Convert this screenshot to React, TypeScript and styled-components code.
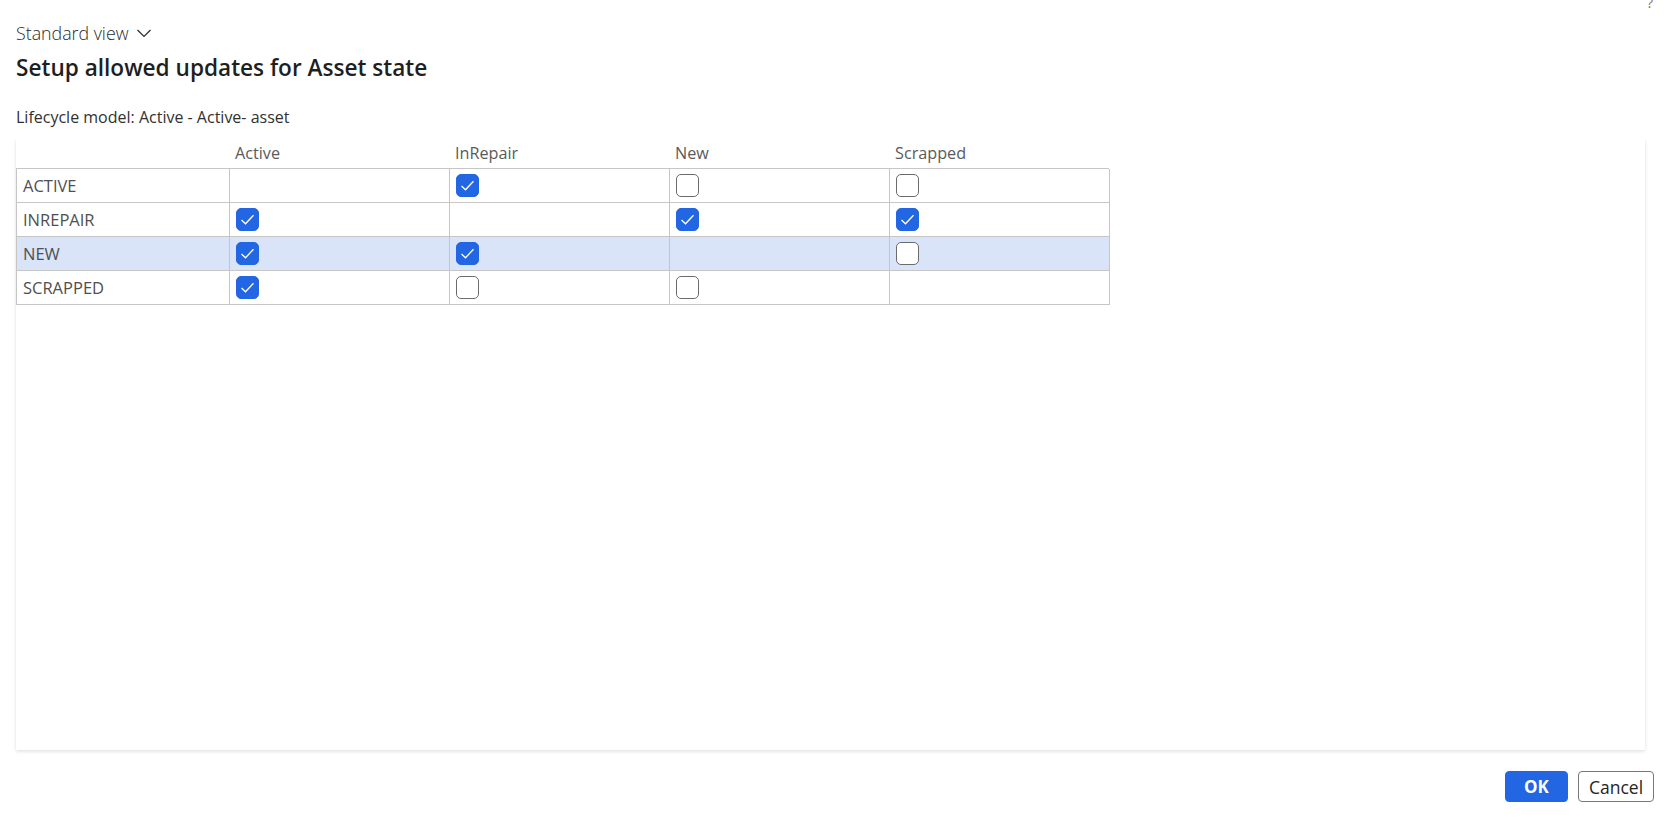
import React from "react";
import styled, { createGlobalStyle } from "styled-components";

const GlobalStyle = createGlobalStyle`
  html, body {
    margin: 0;
    padding: 0;
    background: #ffffff;
  }
  body {
    font-family: "Open Sans", "Noto Sans", sans-serif;
    color: #242424;
  }
`;

const Page = styled.div`
  position: relative;
  display: flex;
  flex-direction: column;
  width: 1670px;
  height: 831px;
  box-sizing: border-box;
  padding: 22px 16px 0 16px;
  overflow: hidden;
`;

const HelpMark = styled.span`
  position: absolute;
  top: -7px;
  right: 17px;
  font-size: 14px;
  color: #707070;
`;

const ViewSelector = styled.div`
  display: flex;
  align-items: center;
  gap: 7px;
  height: 22px;
  font-size: 17.8px;
  font-weight: 300;
  color: #2a2a2a;
`;

const Title = styled.h1`
  margin: 9px 0 0 0;
  font-size: 22.6px;
  line-height: 30px;
  font-weight: 600;
  color: #1f1f1f;
`;

const Caption = styled.div`
  margin-top: 23px;
  font-size: 16px;
  line-height: 22px;
  color: #323130;
`;

const Panel = styled.div`
  margin: 10px 9px 0 0;
  height: 612px;
  background: #ffffff;
  box-shadow: 0 1.6px 3.6px rgba(0, 0, 0, 0.13), 0 0.3px 0.9px rgba(0, 0, 0, 0.11);
`;

const Grid = styled.div`
  width: 1093px;
`;

const HeaderRow = styled.div`
  display: grid;
  grid-template-columns: 213px repeat(4, 220px);
  height: 31px;
  border-bottom: 1px solid #c6c6c6;
  box-sizing: border-box;
`;

const HeaderCell = styled.div`
  display: flex;
  align-items: center;
  padding-left: 6px;
  font-size: 16.2px;
  color: #5a5a5a;
`;

const Row = styled.div<{ $selected?: boolean }>`
  display: grid;
  grid-template-columns: 213px repeat(4, 220px);
  height: 34px;
  box-sizing: border-box;
  border-left: 1px solid #c6c6c6;
  background: ${(p) => (p.$selected ? "#d9e4f8" : "transparent")};
`;

const Cell = styled.div`
  display: flex;
  align-items: center;
  padding-left: 6px;
  border-right: 1px solid #c6c6c6;
  border-bottom: 1px solid #c6c6c6;
  font-size: 16.5px;
  color: #505050;
`;

const Box = styled.span<{ $checked: boolean }>`
  display: inline-flex;
  align-items: center;
  justify-content: center;
  width: 23px;
  height: 23px;
  box-sizing: border-box;
  border-radius: 5px;
  background: ${(p) => (p.$checked ? "#2266e3" : "#ffffff")};
  border: 1px solid ${(p) => (p.$checked ? "#2266e3" : "#6b6b6b")};
`;

const Footer = styled.div`
  display: flex;
  justify-content: flex-end;
  gap: 10px;
  margin-top: 21px;
`;

const Button = styled.button<{ $primary?: boolean }>`
  height: 31px;
  min-width: ${(p) => (p.$primary ? "63px" : "76px")};
  padding: 0 8px;
  border-radius: 4px;
  font-family: "Open Sans", "Noto Sans", sans-serif;
  font-size: ${(p) => (p.$primary ? "17px" : "17.5px")};
  font-weight: ${(p) => (p.$primary ? 700 : 400)};
  color: ${(p) => (p.$primary ? "#ffffff" : "#242424")};
  background: ${(p) => (p.$primary ? "#2266e3" : "#ffffff")};
  border: 1px solid ${(p) => (p.$primary ? "#2266e3" : "#777777")};
  cursor: pointer;
`;

const Chevron = () => (
  <svg width="16" height="16" viewBox="0 0 16 16" fill="none">
    <path d="M1.5 5 L8 11.5 L14.5 5" stroke="#2a2a2a" strokeWidth="1.2" />
  </svg>
);

const Check = ({ checked }: { checked: boolean }) => (
  <Box $checked={checked}>
    {checked ? (
      <svg width="17" height="17" viewBox="0 0 17 17" fill="none">
        <path d="M2.5 9 L6.5 12.8 L14.5 4.2" stroke="#ffffff" strokeWidth="1.3" />
      </svg>
    ) : null}
  </Box>
);

const states = ["Active", "InRepair", "New", "Scrapped"];

// null = same state (no box), true/false = allowed or not
const rows: { label: string; values: (boolean | null)[]; selected?: boolean }[] = [
  { label: "ACTIVE", values: [null, true, false, false] },
  { label: "INREPAIR", values: [true, null, true, true] },
  { label: "NEW", values: [true, true, null, false], selected: true },
  { label: "SCRAPPED", values: [true, false, false, null] },
];

export default function App() {
  return (
    <>
      <GlobalStyle />
      <Page>
        <HelpMark>?</HelpMark>
        <ViewSelector>
          Standard view <Chevron />
        </ViewSelector>
        <Title>Setup allowed updates for Asset state</Title>
        <Caption>Lifecycle model: Active - Active- asset</Caption>
        <Panel>
          <Grid>
            <HeaderRow>
              <HeaderCell />
              {states.map((s) => (
                <HeaderCell key={s}>{s}</HeaderCell>
              ))}
            </HeaderRow>
            {rows.map((r) => (
              <Row key={r.label} $selected={r.selected}>
                <Cell>{r.label}</Cell>
                {r.values.map((v, i) => (
                  <Cell key={i}>{v === null ? null : <Check checked={v} />}</Cell>
                ))}
              </Row>
            ))}
          </Grid>
        </Panel>
        <Footer>
          <Button $primary>OK</Button>
          <Button>Cancel</Button>
        </Footer>
      </Page>
    </>
  );
}
